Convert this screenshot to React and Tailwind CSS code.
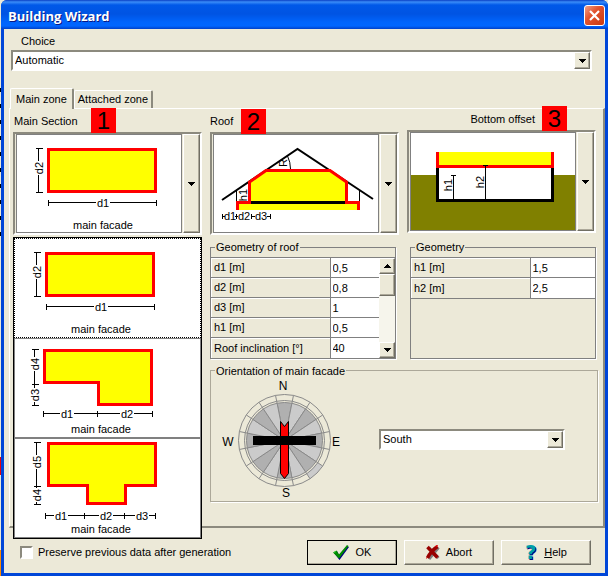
import { useState } from "react";
import clsx from "clsx";

const sunken =
  "border-2 border-t-[#8c8a7e] border-l-[#8c8a7e] border-r-white border-b-white";
const raised =
  "bg-[#ece9d8] border border-t-white border-l-white border-r-[#716f64] border-b-[#716f64] shadow-[inset_-1px_-1px_0_#aca899]";

const Arrow = ({ up }) => (
  <svg width="7" height="4" className="shrink-0" shapeRendering="crispEdges">
    <path d={up ? "M0 4L3.5 0L7 4z" : "M0 0H7L3.5 4z"} fill="#000" />
  </svg>
);

/* Measure line with end ticks, label sits in a gap of the line */
const Dim = ({ x, y, to, at, label, vertical }) => {
  const line = vertical
    ? `M${x} ${y}V${to}M${x - 3} ${y}h7M${x - 3} ${to}h7`
    : `M${x} ${y}H${to}M${x} ${y - 3}v6M${to} ${y - 3}v6`;
  return (
    <g>
      <path d={line} stroke="#000" fill="none" shapeRendering="crispEdges" />
      {vertical ? (
        <>
          <rect x={x - 4} y={at - 7} width="9" height="14" fill="#fff" />
          <Label x={x} y={at} rotate>{label}</Label>
        </>
      ) : (
        <>
          <rect x={at - 7} y={y - 4} width="14" height="9" fill="#fff" />
          <Label x={at} y={y}>{label}</Label>
        </>
      )}
    </g>
  );
};

const Label = ({ x, y, rotate, children }) => (
  <text
    x={x}
    y={y + 4}
    textAnchor="middle"
    fontSize="11"
    transform={rotate ? `rotate(-90 ${x} ${y})` : undefined}
  >
    {children}
  </text>
);

const Facade = () => (
  <text x="86" y="94" textAnchor="middle" fontSize="11">
    main facade
  </text>
);

const Shape = ({ d }) => (
  <path d={d} fill="#ffff00" stroke="#ff0000" strokeWidth="3" shapeRendering="crispEdges" />
);

const SectionRect = () => (
  <>
    <Shape d="M31.5 14.5H138.5V56.5H31.5z" />
    <Dim vertical x={21.5} y={13.5} to={57.5} at={33} label="d2" />
    <Dim x={31.5} y={67.5} to={139.5} at={86} label="d1" />
    <Facade />
  </>
);

const SectionL = () => (
  <>
    <Shape d="M29.5 11.5H136.5V65.5H83.5V43.5H29.5z" />
    <Dim vertical x={19.5} y={10.5} to={45.5} at={25} label="d4" />
    <Dim vertical x={19.5} y={45.5} to={66.5} at={56} label="d3" />
    <Dim x={28.5} y={74.5} to={82.5} at={52} label="d1" />
    <Dim x={82.5} y={74.5} to={137.5} at={112} label="d2" />
    <Facade />
  </>
);

const SectionT = () => (
  <>
    <Shape d="M33.5 4.5H140.5V46.5H110.5V64.5H72.5V46.5H33.5z" />
    <Dim vertical x={21.5} y={3.5} to={47.5} at={23} label="d5" />
    <Dim vertical x={21.5} y={47.5} to={65.5} at={56} label="d4" />
    <Dim x={30.5} y={76.5} to={69.5} at={46} label="d1" />
    <Dim x={69.5} y={76.5} to={109.5} at={91} label="d2" />
    <Dim x={109.5} y={76.5} to={140.5} at={127} label="d3" />
    <Facade />
  </>
);

const RoofDrawing = () => (
  <>
    <path d="M8 65L83.5 14L159 64" fill="none" stroke="#000" strokeWidth="2" />
    <path d="M36 67V47L52 36H116L132 47V67H144V75H24V67z" fill="#ffff00" />
    <path d="M36 67.5H132" stroke="#000" strokeWidth="3" />
    <path
      d="M23.5 75V67.5H35.5V47L52 35.5H116L132.5 47V67.5H144.5V75"
      fill="none"
      stroke="#ff0000"
      strokeWidth="3"
    />
    <path d="M22.5 55V66M145.5 55V66M73.5 21Q76.5 27 76.5 34" fill="none" stroke="#000" />
    <Label x={29} y={60} rotate>h1</Label>
    <Label x={69} y={28} rotate>R</Label>
    <path
      d="M8.5 79v5M8 81.5h3M22.5 79v5M21 81.5h3M37.5 79v5M37 81.5h4M56.5 79v5M53 81.5h4"
      stroke="#000"
      shapeRendering="crispEdges"
    />
    <Label x={16} y={81}>d1</Label>
    <Label x={30} y={81}>d2</Label>
    <Label x={47} y={81}>d3</Label>
  </>
);

const OffsetDrawing = () => (
  <>
    <rect y="42" width="100%" height="100%" fill="#808000" />
    <rect x="26" y="19" width="116" height="50" fill="#fff" />
    <g fill="none" strokeWidth="3" shapeRendering="crispEdges">
      <path d="M26.5 35V67.5H141.5V35" stroke="#000" />
      <rect x="27" y="19" width="114" height="14" fill="#ffff00" />
      <path d="M26.5 19V33.5H141.5V19" stroke="#ff0000" />
    </g>
    <path
      d="M42.5 66V42.5M40 42.5h5M74.5 66V32.5M72 32.5h5"
      stroke="#000"
      shapeRendering="crispEdges"
    />
    <Label x={37} y={52} rotate>h1</Label>
    <Label x={69} y={49} rotate>h2</Label>
  </>
);

const sections = [
  { name: "Rectangle", Drawing: SectionRect },
  { name: "L shape", Drawing: SectionL },
  { name: "T shape", Drawing: SectionT },
];

const Picker = ({ label, children, ...rest }) => (
  <button
    type="button"
    aria-label={label}
    className={clsx("flex w-full gap-px bg-[#ece9d8] pl-px", sunken)}
    {...rest}
  >
    <span className="block min-w-0 flex-1 border border-[#808080] bg-white">
      <svg className="block h-[97px] w-full">{children}</svg>
    </span>
    <span className={clsx("flex w-[17px] items-center justify-center self-stretch", raised)}>
      <Arrow />
    </span>
  </button>
);

const Badge = ({ className, children }) => (
  <span
    className={clsx(
      "absolute flex size-[25px] items-center justify-center bg-[#ff0000] text-2xl leading-none",
      className
    )}
  >
    {children}
  </span>
);

const Dropdown = ({ id, options, className, ...rest }) => (
  <div className={clsx("relative", className)}>
    <select
      id={id}
      className={clsx("block h-[21px] w-full appearance-none bg-white pr-5 pl-0.5 outline-none", sunken)}
      {...rest}
    >
      {options.map((o) => (
        <option key={o}>{o}</option>
      ))}
    </select>
    <span
      className={clsx(
        "pointer-events-none absolute inset-y-0.5 right-0.5 flex w-4 items-center justify-center",
        raised
      )}
    >
      <Arrow />
    </span>
  </div>
);

const Group = ({ title, className, children }) => (
  <fieldset className={clsx("min-w-0 border shadow-[1px_1px_0_#fff]", className)}>
    <legend className="ml-1 px-px leading-4">{title}</legend>
    {children}
  </fieldset>
);

const ParamTable = ({ rows, valueWidth }) => (
  <table className="w-full table-fixed border-collapse">
    <tbody>
      {rows.map(([name, value]) => (
        <tr key={name} className="h-5 border-t border-[#808080]">
          <th
            scope="row"
            className="p-0 pl-[3px] text-left font-normal whitespace-nowrap shadow-[inset_1px_1px_0_#fff]"
          >
            {name}
          </th>
          <td className={clsx("border-l border-[#808080] bg-white p-0", valueWidth)}>
            <input
              aria-label={name}
              defaultValue={value}
              className="block w-full bg-transparent px-0.5 leading-4 outline-none"
            />
          </td>
        </tr>
      ))}
    </tbody>
  </table>
);

const roofRows = [
  ["d1 [m]", "0,5"],
  ["d2 [m]", "0,8"],
  ["d3 [m]", "1"],
  ["h1 [m]", "0,5"],
  ["Roof inclination [°]", "40"],
];

const offsetRows = [
  ["h1 [m]", "1,5"],
  ["h2 [m]", "2,5"],
];

const polar = (r, deg) => {
  const a = (deg * Math.PI) / 180;
  return `${(r * Math.sin(a)).toFixed(2)} ${(-r * Math.cos(a)).toFixed(2)}`;
};

const Compass = () => {
  const steps = Array.from({ length: 16 }, (_, i) => i * 22.5);
  return (
    <svg className="h-[122px] w-[126px] shrink-0">
      <g transform="translate(65.5 61.5)">
        {steps.map((deg, i) => (
          <path
            key={deg}
            d={`M0 0L${polar(38, deg - 11.25)}A38 38 0 0 1 ${polar(38, deg + 11.25)}z`}
            fill={i % 2 ? "#cbcbcb" : "#b0b0b0"}
            stroke="#8a8a8a"
          />
        ))}
        <path
          d={`M${polar(40, 124)}L${polar(46, 124)}A46 46 0 0 1 ${polar(46, 146)}L${polar(40, 146)}z`}
          fill="#cbcbcb"
        />
        {steps.map((deg) => (
          <path
            key={deg}
            d={`M${polar(38, deg + 11.25)}L${polar(46, deg + 11.25)}`}
            stroke="#8a8a8a"
          />
        ))}
        <circle r="46" fill="none" stroke="#8a8a8a" />
        <circle r="40" fill="none" stroke="#8a8a8a" />
        <path d="M-4 -19L0 -14L4 -19V33L0 38L-4 33z" fill="#ff0000" stroke="#000" />
        <rect x="-31.5" y="-4.5" width="63" height="9" fill="#000" />
      </g>
      <g fontSize="12" textAnchor="middle">
        <text x="64" y="11">N</text>
        <text x="67" y="118">S</text>
        <text x="9" y="67">W</text>
        <text x="117" y="67">E</text>
      </g>
    </svg>
  );
};

const CheckIcon = () => (
  <svg width="17" height="15">
    <path d="M1 8L4 6L6 10L14 1L16 2L6.500 15z" fill="#000080" />
    <path d="M0 7.500L3.500 5.500L6 9.500L14 0L15.500 1L6 13.500z" fill="#008c00" />
    <path d="M1 7.500L3 6.500" stroke="#30d030" />
  </svg>
);

const CrossIcon = () => (
  <svg width="14" height="15">
    <path d="M3 3L12.500 13M12.500 2.500L3 14" stroke="#808080" strokeWidth="3" />
    <path d="M1.500 2L11.500 12.500M11.500 1.500Q5 6 1.500 13" stroke="#990000" strokeWidth="3.500" fill="none" />
    <path d="M9.500 1.500L12 .5M0 12.500V14" stroke="#ff0000" />
  </svg>
);

const HelpIcon = () => (
  <svg
    width="13"
    height="17"
    className="overflow-visible"
    fontFamily="DejaVu Sans"
    fontWeight="bold"
    fontSize="20"
  >
    <text x="1" y="16" fill="#000080">?</text>
    <text x="0" y="15" fill="#00a0a8">?</text>
  </svg>
);

const PushButton = ({ icon, isDefault, children }) => (
  <button
    type="button"
    className={clsx(
      "flex h-[25px] w-[90px] items-center justify-center gap-1.5",
      raised,
      isDefault && "outline outline-black -outline-offset-1"
    )}
  >
    {icon}
    <span>{children}</span>
  </button>
);

/* Sliver of the window behind the dialog */
const Backdrop = () => (
  <div className="flex w-px shrink-0 flex-col bg-[#ece9d8]">
    <div className="h-[88px]" />
    <div className="h-[152px] bg-[repeating-linear-gradient(#000_0_4px,#ece9d8_4px_16px)]" />
    <div className="h-[217px]" />
    <div className="h-[18px] bg-red-600" />
    <div className="flex-1" />
    <div className="h-[26px] bg-[#ff8c00]" />
  </div>
);

const App = () => {
  const [section, setSection] = useState(0);
  const [open, setOpen] = useState(true);
  const [tab, setTab] = useState("Main zone");
  const Section = sections[section].Drawing;

  const pick = (i) => {
    setSection(i);
    setOpen(false);
  };

  return (
    <div className="flex min-h-screen bg-[#ece9d8] font-['Liberation_Sans',Arial,sans-serif] text-[11px] text-black">
      <Backdrop />
      <div className="flex min-w-0 flex-1 flex-col overflow-hidden rounded-t-md bg-[#0046d8]">
        <header className="flex h-[29px] items-center justify-between bg-[linear-gradient(#0a3fc4_0,#3a8cf8_2px,#0058e8_5px,#0054e3_14px,#0064fc_22px,#0066ff_26px,#0040c8_29px)] pr-[3px] pl-[7px]">
          <h1 className="pt-1 font-['Open_Sans',sans-serif] text-[13px] font-bold text-white [text-shadow:1px_1px_#0a1883]">
            Building Wizard
          </h1>
          <button
            type="button"
            aria-label="Close"
            className="mt-0.5 flex size-[21px] items-center justify-center rounded-[3px] border border-white bg-[linear-gradient(135deg,#f0a088,#e2532f_40%,#c93a10)]"
          >
            <svg width="13" height="13">
              <path d="M2 2L11 11M11 2L2 11" stroke="#fff" strokeWidth="2.200" />
            </svg>
          </button>
        </header>

        <main className="mx-[3px] mb-[3px] flex-1 bg-[#ece9d8] pt-1">
          <label htmlFor="choice" className="block pl-[17px] leading-4">
            Choice
          </label>
          <Dropdown id="choice" options={["Automatic", "Manual"]} className="mt-px mr-[13px] ml-[7px]" />

          <div role="tablist" className="mt-[17px] ml-1.5 flex items-end">
            {["Main zone", "Attached zone"].map((name) => (
              <button
                key={name}
                type="button"
                role="tab"
                aria-selected={tab === name}
                onClick={() => setTab(name)}
                className={clsx(
                  "rounded-t-xs border-t border-r-2 border-l border-t-white border-r-[#8c8a7e] border-l-white bg-[#ece9d8]",
                  tab === name ? "relative z-10 -mb-px h-[21px] px-[5px]" : "h-[18px] px-[3px]"
                )}
              >
                {name}
              </button>
            ))}
          </div>

          <section className="ml-[5px] grid grid-cols-3 items-start gap-x-2 gap-y-1 border-t border-r-2 border-b-2 border-l border-t-white border-r-[#8c8a7e] border-b-[#8c8a7e] border-l-white pr-[7px] pb-6 pl-[3px]">
            <div className="relative">
              <h2 className="h-[23px] pl-px leading-6">Main Section</h2>
              <Picker
                label="Main Section"
                aria-haspopup="listbox"
                aria-expanded={open}
                onClick={() => setOpen(!open)}
              >
                <Section />
              </Picker>
              <Badge className="-top-px left-[78px]">1</Badge>
              {open && (
                <ul
                  role="listbox"
                  aria-label="Main Section"
                  className="absolute top-full left-0 z-20 mt-0.5 w-full border border-black bg-white"
                >
                  {sections.map(({ name, Drawing }, i) => (
                    <li
                      key={name}
                      role="option"
                      aria-label={name}
                      aria-selected={i === section}
                      onClick={() => pick(i)}
                      className={clsx(
                        "border",
                        i === section ? "border-dotted border-black" : "border-[#808080]"
                      )}
                    >
                      <svg className="block h-[98px] w-full">
                        <Drawing />
                      </svg>
                    </li>
                  ))}
                </ul>
              )}
            </div>

            <div className="relative">
              <h2 className="h-[23px] leading-6">Roof</h2>
              <Picker label="Roof">
                <RoofDrawing />
              </Picker>
              <Badge className="top-0 left-[31px]">2</Badge>
            </div>

            <div className="relative">
              <h2 className="h-[21px] pr-[61px] text-right leading-5">Bottom offset</h2>
              <Picker label="Bottom offset">
                <OffsetDrawing />
              </Picker>
              <Badge className="-top-[3px] right-[29px]">3</Badge>
            </div>

            <Group title="Geometry of roof" className="col-start-2 mr-[3px] border-[#808080]">
              <div className="mt-0.5 flex">
                <div className="min-w-0 flex-1">
                  <ParamTable rows={roofRows} valueWidth="w-[49px]" />
                </div>
                <div className="flex w-4 flex-col border-t border-[#808080] bg-[#f6f5ec]">
                  <button
                    type="button"
                    aria-label="Scroll up"
                    className={clsx("flex h-4 items-center justify-center", raised)}
                  >
                    <Arrow up />
                  </button>
                  <div className={clsx("h-[22px]", raised)} />
                  <button
                    type="button"
                    aria-label="Scroll down"
                    className={clsx("mt-auto flex h-4 items-center justify-center", raised)}
                  >
                    <Arrow />
                  </button>
                </div>
              </div>
            </Group>

            <Group title="Geometry" className="ml-[3px] self-stretch border-[#808080]">
              <div className="mt-0.5 border-b border-[#808080]">
                <ParamTable rows={offsetRows} valueWidth="w-[65px]" />
              </div>
            </Group>

            <Group
              title="Orientation of main facade"
              className="col-span-2 col-start-2 -mr-0.5 border-[#aca899]"
            >
              <div className="flex items-center justify-between pr-8 pl-2">
                <Compass />
                <Dropdown
                  aria-label="Orientation"
                  options={["South", "North", "East", "West"]}
                  className="w-[186px]"
                />
              </div>
            </Group>
          </section>

          <footer className="flex items-center gap-[7px] pt-3 pr-[14px] pb-1.5 pl-4">
            <label className="mr-auto flex items-center gap-[5px]">
              <input
                type="checkbox"
                className={clsx(
                  "size-[13px] appearance-none bg-white checked:bg-[#316ac5]",
                  sunken
                )}
              />
              Preserve previous data after generation
            </label>
            <PushButton icon={<CheckIcon />} isDefault>OK</PushButton>
            <PushButton icon={<CrossIcon />}>Abort</PushButton>
            <PushButton icon={<HelpIcon />}>
              <u>H</u>elp
            </PushButton>
          </footer>
        </main>
      </div>
    </div>
  );
};

export default App;
